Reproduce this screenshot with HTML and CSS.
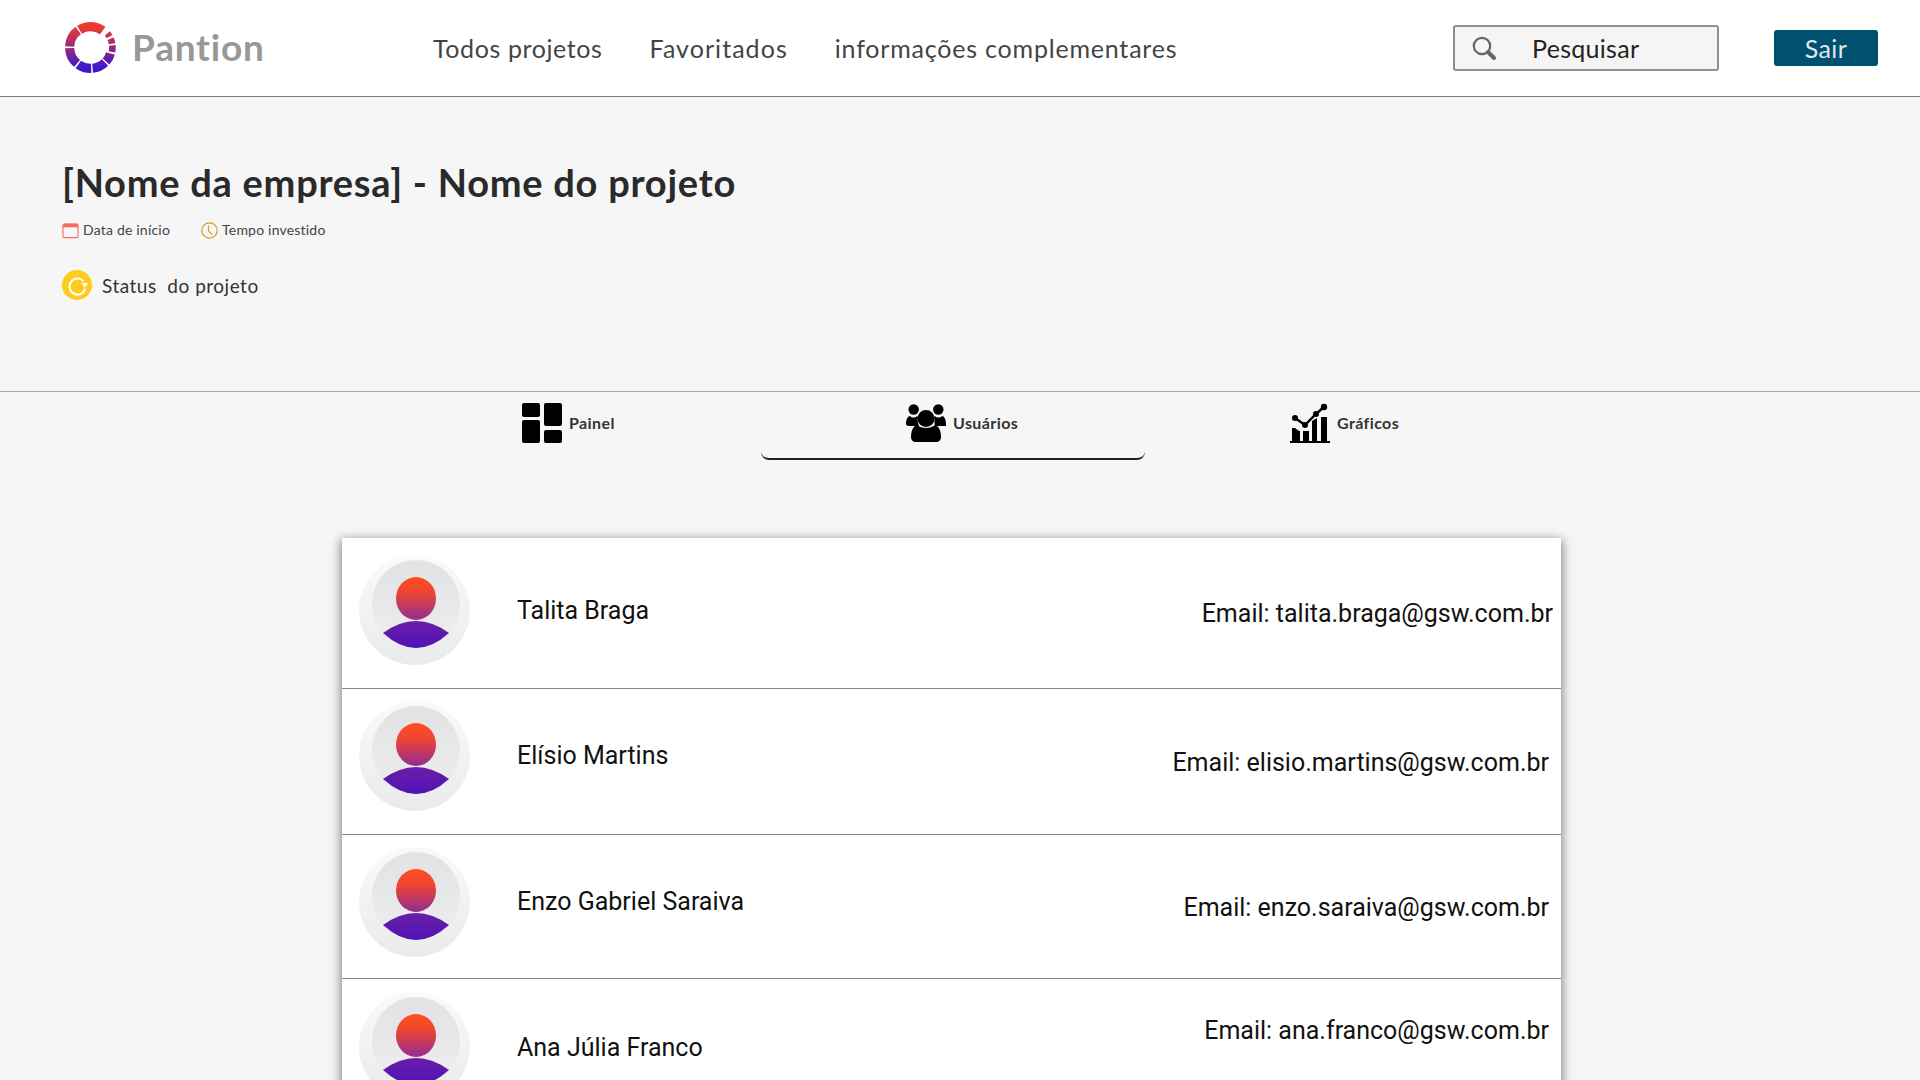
FILE: index.html
```html
<!DOCTYPE html>
<html lang="pt-BR">
<head>
<meta charset="utf-8">
<title>Pantion</title>
<link rel="stylesheet" href="styles.css">
</head>
<body>
<svg class="defs" width="0" height="0" aria-hidden="true">
  <defs>
    <linearGradient id="logoGrad" x1="0" y1="0" x2="0" y2="1"><stop offset="0" stop-color="#ee3b2c"/><stop offset="1" stop-color="#3d17d0"/></linearGradient>
    <linearGradient id="headGrad" x1="0" y1="0" x2="0" y2="1"><stop offset="0" stop-color="#ff4f1e"/><stop offset=".35" stop-color="#f0452f"/><stop offset="1" stop-color="#932c92"/></linearGradient>
    <linearGradient id="bodyGrad" x1="0" y1="0" x2="0" y2="1"><stop offset="0" stop-color="#6c1ea6"/><stop offset="1" stop-color="#4c14b8"/></linearGradient>
    <linearGradient id="ringGrad" x1="0" y1="0" x2="0" y2="1"><stop offset="0" stop-color="#e2e1e3"/><stop offset="1" stop-color="#eeedef"/></linearGradient>
    <linearGradient id="outerGrad" x1="0" y1="0" x2="0" y2="1"><stop offset="0" stop-color="#fafafa"/><stop offset="1" stop-color="#ebeaeb"/></linearGradient>
    <symbol id="avatar" viewBox="0 0 111 110">
      <ellipse cx="55.5" cy="55" rx="55.5" ry="55" fill="url(#outerGrad)"/>
      <circle cx="57" cy="49" r="44" fill="url(#ringGrad)"/>
      <ellipse cx="57" cy="43.5" rx="20" ry="21.5" fill="url(#headGrad)"/>
      <path d="M24 78Q57 54 90 78Q57 108 24 78Z" fill="url(#bodyGrad)"/>
    </symbol>
  </defs>
</svg>

<header class="topbar">
  <div class="brand">
    <svg class="logo" viewBox="0 0 50 50">
      <circle cx="25" cy="25" r="20.5" fill="none" stroke="url(#logoGrad)" stroke-width="9" pathLength="360" stroke-dasharray="0 17 25 4 38 4 38 4 48 5 51 4 68 54"/>
      <circle cx="25" cy="25" r="21.5" fill="none" stroke="url(#logoGrad)" stroke-width="6.5" pathLength="360" stroke-dasharray="12 308 10 6 14 4 6"/>
    </svg>
    <span class="brand-name">Pantion</span>
  </div>
  <nav class="mainnav">
    <a>Todos projetos</a>
    <a>Favoritados</a>
    <a>informações complementares</a>
  </nav>
  <div class="search">
    <svg class="search-icon" viewBox="0 0 24 24"><circle cx="10" cy="10" r="8.2" fill="none" stroke="#666" stroke-width="2.2"/><path d="M16 16l6 6" stroke="#666" stroke-width="4" stroke-linecap="round"/></svg>
    <span>Pesquisar</span>
  </div>
  <button class="logout">Sair</button>
</header>

<section class="project">
  <h1>[Nome da empresa] - Nome do projeto</h1>
  <div class="meta">
    <span class="meta-item">
      <svg class="meta-icon" viewBox="0 0 18 17"><rect x="1" y="2" width="16" height="14" rx="1.5" fill="none" stroke="#f76b5c" stroke-width="1.2"/><path d="M1 2.5a1.5 1.5 0 0 1 1.5-1.5h13A1.5 1.5 0 0 1 17 2.5V5H1Z" fill="#f76b5c"/></svg>
      Data de início
    </span>
    <span class="meta-item">
      <svg class="meta-icon" viewBox="0 0 17 17"><circle cx="8.5" cy="8.5" r="7.7" fill="none" stroke="#d69c22" stroke-width="1.2"/><path d="M7.5 3.5v5.3l3.5 4" fill="none" stroke="#d69c22" stroke-width="1.1"/></svg>
      Tempo investido
    </span>
  </div>
  <div class="status">
    <svg class="status-icon" viewBox="0 0 30 30"><circle cx="15" cy="15" r="15" fill="#ffcb1f"/><path d="M21.5 11.2A8 8 0 1 0 23.3 18.5" fill="none" stroke="#fff" stroke-width="2"/><path d="M19.5 13H26L22.8 18Z" fill="#fff"/></svg>
    <span>Status&nbsp; do projeto</span>
  </div>
</section>

<nav class="tabs">
  <a class="tab">
    <svg class="tab-icon" viewBox="0 0 40 40"><rect x="0" y="0" width="18" height="14" rx="2"/><rect x="0" y="17" width="18" height="23" rx="2"/><rect x="22" y="0" width="18" height="23" rx="2"/><rect x="22" y="27" width="18" height="13" rx="2"/></svg>
    <span>Painel</span>
  </a>
  <a class="tab tab-active">
    <svg class="tab-icon" viewBox="0 0 40 40"><circle cx="7.7" cy="6.5" r="5.2"/><circle cx="32.3" cy="6.5" r="5.2"/><path d="M0 21c0-5 2-8 4-8 2 2 5 2 7 0l1 1c-1 3 0 6 1 9H3c-2 0-3-1-3-2Z"/><path d="M40 21c0-5-2-8-4-8-2 2-5 2-7 0l-1 1c1 3 0 6 1 9h10c2 0 3-1 3-2Z"/><circle cx="20" cy="15.5" r="8.5"/><path d="M5 34c0-6 2-11 6-12 5 4 13 4 18 0 4 1 6 6 6 12 0 3-2 5-5 5H10c-3 0-5-2-5-5Z"/></svg>
    <span>Usuários</span>
  </a>
  <a class="tab">
    <svg class="tab-icon" viewBox="0 0 40 40"><path d="M0 38h40v2H0Z"/><path d="M2 38V25h3l4 3h1v10ZM13 38V28h6v10ZM22 38V18l5-3v23ZM31 38V14h6v24Z"/><path d="M5 15l10 7L26 11l8-7" fill="none" stroke="#000" stroke-width="2.4"/><circle cx="5" cy="15" r="3"/><circle cx="15" cy="22" r="3"/><circle cx="26" cy="11" r="3"/><circle cx="34" cy="4" r="3.2"/></svg>
    <span>Gráficos</span>
  </a>
</nav>

<main class="users">
  <article class="user user-1">
    <svg class="avatar"><use href="#avatar"/></svg>
    <span class="name">Talita Braga</span>
    <span class="email">Email: talita.braga@gsw.com.br</span>
  </article>
  <article class="user user-2">
    <svg class="avatar"><use href="#avatar"/></svg>
    <span class="name">Elísio Martins</span>
    <span class="email">Email: elisio.martins@gsw.com.br</span>
  </article>
  <article class="user user-3">
    <svg class="avatar"><use href="#avatar"/></svg>
    <span class="name">Enzo Gabriel Saraiva</span>
    <span class="email">Email: enzo.saraiva@gsw.com.br</span>
  </article>
  <article class="user user-4">
    <svg class="avatar"><use href="#avatar"/></svg>
    <span class="name">Ana Júlia Franco</span>
    <span class="email">Email: ana.franco@gsw.com.br</span>
  </article>
</main>
</body>
</html>
```
FILE: styles.css
```css
* { box-sizing: border-box; }
html, body { margin: 0; height: 1080px; overflow: hidden; }
body { background: #f6f6f6; font-family: "Lato", "Open Sans", sans-serif; color: #2f2f2f; }
.defs { display: block; height: 0; }

.topbar { display: flex; align-items: center; height: 97px; background: #fff; border-bottom: 1px solid #7f7f7f; padding-left: 65px; }
.brand { display: flex; align-items: center; gap: 16px; width: 368px; }
.logo { width: 51px; height: 51px; display: block; margin-top: -1px; }
.brand-name { font-size: 37px; line-height: 44px; font-weight: 700; color: #989898; letter-spacing: .8px; margin-top: -2px; }
.mainnav { display: flex; gap: 47px; font-size: 25px; color: #444; letter-spacing: .8px; width: 1020px; }
.mainnav a:nth-child(1) { letter-spacing: .6px; }
.mainnav a:nth-child(2) { letter-spacing: 1.05px; }
.search { display: flex; align-items: center; width: 266px; height: 46px; border: 2px solid #909090; border-radius: 3px; background: #f5f5f5; padding-left: 17px; font-size: 25px; color: #222; letter-spacing: .3px; }
.search-icon { width: 24px; height: 24px; margin-right: 36px; }
.logout { width: 104px; height: 36px; margin-left: 55px; background: #00506f; border: 0; border-radius: 3px; color: #dfeaef; font: 400 25px "Lato", sans-serif; letter-spacing: .4px; }

.project { height: 295px; border-bottom: 1px solid #a8a8a8; padding: 62px 0 0 62px; }
h1 { margin: 0; font-size: 38px; line-height: 46px; font-weight: 700; color: #2a2a2a; letter-spacing: .74px; }
.meta { display: flex; gap: 31px; margin-top: 16px; font-size: 14px; line-height: 18px; color: #444; }
.meta-item { display: flex; align-items: center; gap: 4px; letter-spacing: .2px; }
.meta-icon { width: 17px; height: 17px; }
.status { display: flex; align-items: center; gap: 10px; margin-top: 31px; font-size: 19px; color: #333; letter-spacing: .5px; }
.status-icon { width: 30px; height: 30px; }

.tabs { display: flex; margin-left: 377px; height: 69px; }
.tab { display: flex; align-items: flex-start; gap: 7px; width: 384px; height: 68px; padding: 11px 0 0 145px; font-size: 16px; font-weight: 700; color: #333; }
.tab span { line-height: 40px; letter-spacing: .4px; }
.tab-active { border-bottom: 2px solid #222; border-radius: 0 0 8px 8px; }
.tab-icon { width: 40px; height: 40px; flex: none; fill: #000; }

.users { width: 1219px; margin: 77px 0 0 342px; background: #fff; box-shadow: 0 3px 10px 1px rgba(0,0,0,.5); }
.user { display: flex; align-items: flex-start; border-bottom: 1px solid #8a8a8a; padding-left: 17px; }
.avatar { width: 111px; height: 110px; flex: none; }
.name { margin-left: 47px; font: 400 25px/28px "Roboto", sans-serif; color: #111; }
.email { margin-left: auto; font: 400 25px/30px "Roboto", sans-serif; color: #111; }
.user-1 { height: 151px; padding-right: 8px; }
.user-1 .avatar { margin-top: 17px; }
.user-1 .name { margin-top: 59px; }
.user-1 .email { margin-top: 61px; }
.user-2 { height: 146px; padding-right: 12px; }
.user-2 .avatar { margin-top: 12px; }
.user-2 .name { margin-top: 53px; }
.user-2 .email { margin-top: 59px; }
.user-3 { height: 144px; padding-right: 12px; }
.user-3 .avatar { margin-top: 12px; }
.user-3 .name { margin-top: 53px; }
.user-3 .email { margin-top: 58px; }
.user-4 { height: 140px; padding-right: 12px; border-bottom: 0; }
.user-4 .avatar { margin-top: 13px; }
.user-4 .name { margin-top: 55px; }
.user-4 .email { margin-top: 37px; }
```
